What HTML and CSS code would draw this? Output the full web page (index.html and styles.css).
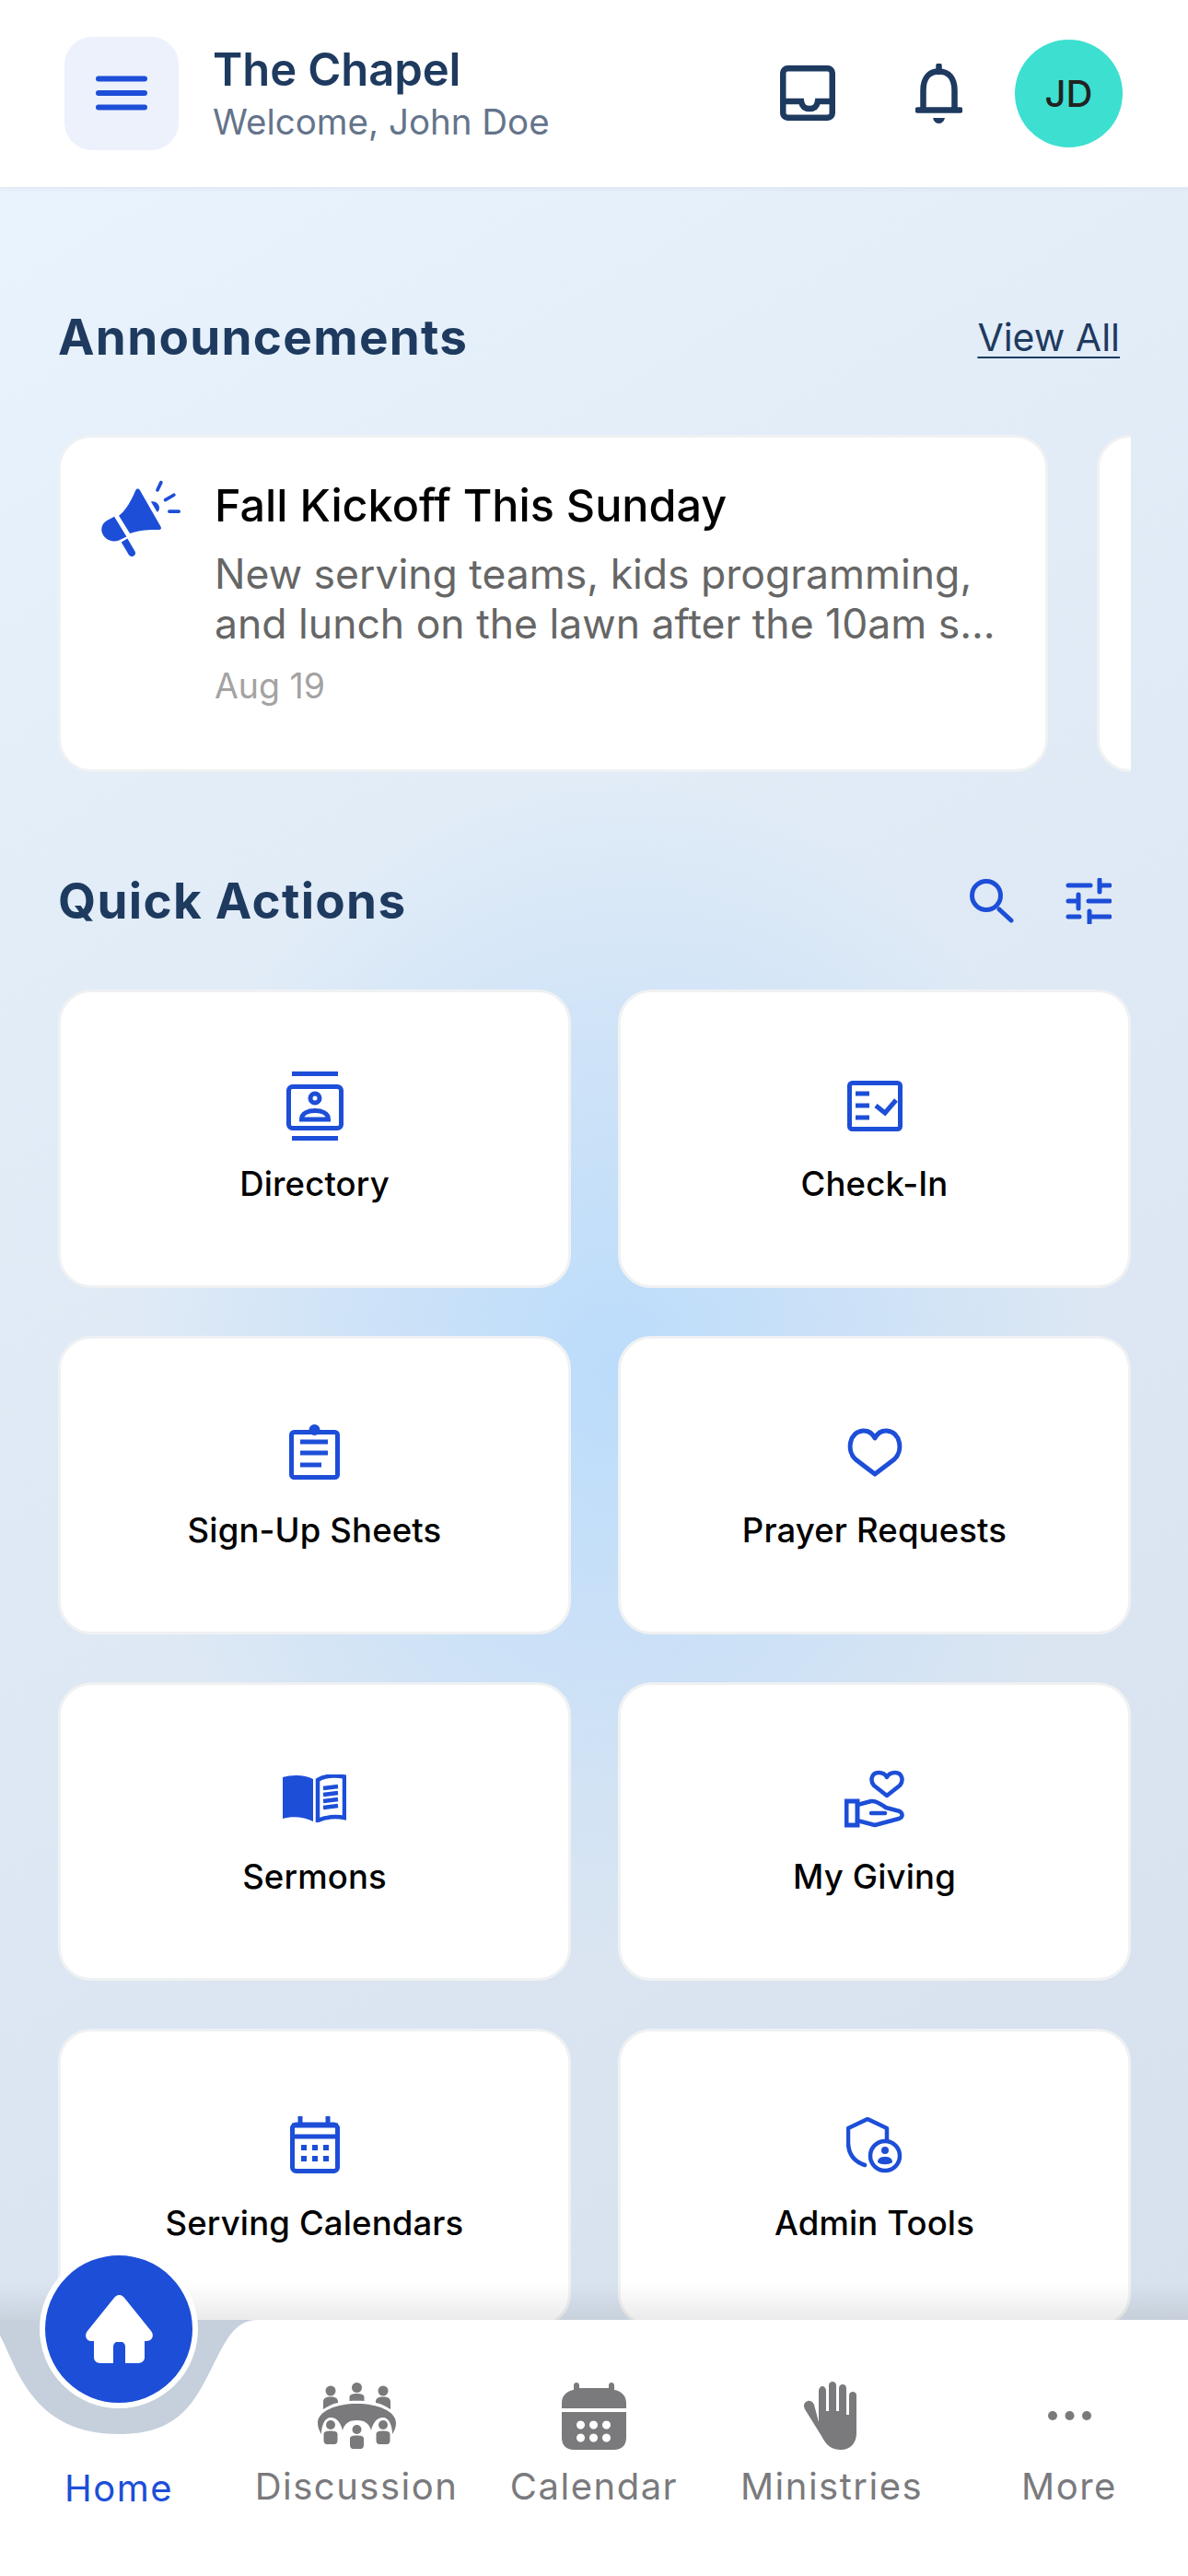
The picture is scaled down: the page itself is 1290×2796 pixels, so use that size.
FILE: index.html
```html
<!DOCTYPE html>
<html lang="en">
<head>
<meta charset="utf-8">
<title>The Chapel</title>
<link rel="stylesheet" href="styles.css">
</head>
<body>
<div class="app">
  <header class="topbar">
    <button class="menu-btn" aria-label="Menu">
      <svg width="56" height="38" viewBox="0 0 56 38" class="ic-stroke"><path d="M3 3.500H53M3 19H53M3 34.500H53"/></svg>
    </button>
    <div class="brand">
      <div class="brand-title">The Chapel</div>
      <div class="brand-sub">Welcome, John Doe</div>
    </div>
    <div class="top-actions">
      <svg class="ic-navy inbox" width="60" height="60" viewBox="0 0 60 60"><rect x="3.250" y="3.250" width="53.500" height="53.500" rx="5"/><path d="M3 39H23C24 45 27 47 32 47C37 47 40 45 41 39H57"/></svg>
      <svg class="ic-navy bell" width="51" height="65" viewBox="0 0 51 65"><path d="M8.500 50V29C8.500 16 15 8.500 25.500 8.500C36 8.500 42.500 16 42.500 29V50"/><path d="M2.500 50.500H48.500"/><path d="M25.500 2.500V9"/><path class="solid" d="M19 59H32C31 63 28.500 65 25.500 65C22.500 65 20 63 19 59Z"/></svg>
      <div class="avatar">JD</div>
    </div>
  </header>

  <main class="content">
    <div class="section-head ann-head">
      <h2>Announcements</h2>
      <a class="view-all">View All</a>
    </div>
    <div class="carousel">
      <article class="ann-card">
        <svg class="mega" width="88" height="85" viewBox="90 60 264 256"><path class="fill" d="M205 96C209 90 216 91 219 97L287 216C290 222 287 226 281 226C250 226 220 226 186 238L150 180C175 160 190 130 205 96Z"/><path class="fill" d="M135 183L175 248L150 260C125 270 100 255 94 232C91 214 100 200 115 193Z"/><path class="fill" d="M158 266L178 254L203 297C206 304 203 309 197 312C191 314 185 312 182 307Z"/><path class="fill" d="M255 134C268 130 280 140 282 152C283 160 280 165 275 168Z"/><path class="line" d="M288 71L276 96M302 128L330 112M315 166H346"/></svg>
        <div class="ann-body">
          <h3>Fall Kickoff This Sunday</h3>
          <p>New serving teams, kids programming, and lunch on the lawn after the 10am s...</p>
          <time>Aug 19</time>
        </div>
      </article>
      <article class="ann-card"></article>
    </div>

    <div class="section-head qa-head">
      <h2>Quick Actions</h2>
      <div class="qa-tools">
        <svg width="48" height="48" viewBox="0 0 48 48" class="ic-blue"><circle cx="18" cy="18" r="15.500"/><path d="M32 33L45 45"/></svg>
        <svg width="50" height="50" viewBox="0 0 50 50" class="ic-blue"><path d="M3 8H27M37 2V15M37 8H48M3 25H13M14 18V33M25 25H48M3 42H15M26 36V49M26 42H48"/></svg>
      </div>
    </div>

    <div class="tiles">
      <a class="tile"><span class="tile-ic"><svg width="62" height="75" viewBox="0 0 62 75" class="ic-blue butt"><path d="M6 2.500H56M6 72.500H56"/><rect x="2.500" y="16.500" width="57" height="45" rx="4"/><circle cx="31" cy="29" r="5"/><path d="M16.500 52C16.500 45 24 42.500 31 42.500C38 42.500 45.500 45 45.500 52Z"/></svg></span><span class="tile-label">Directory</span></a>

      <a class="tile"><span class="tile-ic"><svg width="60" height="55" viewBox="0 0 60 55" class="ic-blue butt"><rect x="2.500" y="2.500" width="55" height="50" rx="3"/><path d="M9 14H24M9 27H24M9 40H24"/><path d="M31 27L41 35L53 21"/></svg></span><span class="tile-label">Check-In</span></a>

      <a class="tile"><span class="tile-ic"><svg width="55" height="60" viewBox="0 0 55 60" class="ic-blue butt"><rect x="2.500" y="8.500" width="50" height="49" rx="3"/><circle class="solid" cx="27.500" cy="6" r="6"/><path d="M12 19H42M12 31H42M12 44H35"/></svg></span><span class="tile-label">Sign-Up Sheets</span></a>

      <a class="tile"><span class="tile-ic"><svg width="60" height="55" viewBox="0 0 60 55" class="ic-blue"><path d="M30 51L9 35C-1 26 2 5 17 4C24 3.500 28 8 30 12C32 8 36 3.500 43 4C58 5 61 26 51 35Z"/></svg></span><span class="tile-label">Prayer Requests</span></a>

      <a class="tile"><span class="tile-ic"><svg width="69" height="52" viewBox="0 0 69 52" class="ic-blue butt thin"><path class="solid" d="M0 3C10 0 24 0 33 5V51C24 46 10 45 0 48Z"/><path d="M38 6C46 1 58 1 67 2.500V47C58 45 46 46 38 50Z"/><path d="M44 15L60 13M44 22L60 20M44 29L60 27M44 36L60 34"/></svg></span><span class="tile-label">Sermons</span></a>

      <a class="tile"><span class="tile-ic"><svg width="65" height="63" viewBox="0 0 65 63" class="ic-blue thin"><path d="M46 28L32 17C27 11 30 3 37 3C41 3 44.500 5 46 8C47.500 5 51 3 55 3C62 3 65 11 60 17Z"/><path class="square" d="M2 34H14V60H2Z"/><path d="M14 38L29 34C35 33 40 38 45 41L60 45C64 48 63 52 59 53L33 60L14 55"/><path d="M29 47H44"/></svg></span><span class="tile-label">My Giving</span></a>

      <a class="tile"><span class="tile-ic"><svg width="54" height="62" viewBox="0 0 54 62" class="ic-blue butt"><rect x="2.500" y="9" width="49" height="50.500" rx="4"/><path d="M11 0V9M41 0V9M2 22H52M2 10H52"/><path class="squares" d="M12 31h6v6h-6zM24 31h6v6h-6zM36 31h6v6h-6zM12 43h6v6h-6zM24 43h6v6h-6zM36 43h6v6h-6z"/></svg></span><span class="tile-label">Serving Calendars</span></a>

      <a class="tile"><span class="tile-ic"><svg width="61" height="61" viewBox="0 0 61 61" class="ic-blue thin"><path d="M44 25V12L23 2L2 12V27C2 40 8 48 20 52"/><circle cx="42" cy="42" r="16"/><circle class="solid" cx="42" cy="36" r="4"/><path class="solid" d="M34 49C34 44 38 43 42 43C46 43 50 44 50 49C46 52 38 52 34 49Z"/></svg></span><span class="tile-label">Admin Tools</span></a>
    </div>
  </main>

  <nav class="tabbar">
    <svg class="tab-bg" width="1290" height="328" viewBox="0 -50 1290 328">
      <defs><linearGradient id="fade" x1="0" y1="0" x2="0" y2="1"><stop offset="0" stop-color="#000" stop-opacity="0"/><stop offset="1" stop-color="#000" stop-opacity=".08"/></linearGradient></defs>
      <rect x="0" y="-40" width="1290" height="40" fill="url(#fade)"/>
      <rect x="0" y="0" width="290" height="130" fill="#c5d0dc"/>
      <path d="M0 17C18 50 34 124 129 124C196 124 212 88 232 48C246 20 256 0 280 0H1290V278H0Z" fill="#fff"/>
    </svg>
    <div class="tab tab-active">
      <span class="home-fab">
        <svg width="75" height="74" viewBox="0 0 75 74"><path d="M37.500 0C40 0 42 1.500 43 3L72 39C76 44 73 50 67 50H65V68C65 71 62 74 58 74H44V56C44 53 42 51 40 51H35C33 51 31 53 31 56V74H17C13 74 10 71 10 68V50H7C2 50 -1 44 3 39L32 3C33 1.500 35 0 37.500 0Z" fill="#fff"/></svg>
      </span>
      <span class="tab-ic"></span>
      <span class="tab-label">Home</span>
    </div>
    <div class="tab">
      <span class="tab-ic"><svg width="85" height="72" viewBox="0 0 85 72" class="ic-grey"><circle cx="14" cy="9" r="5.500"/><circle cx="42.500" cy="5.500" r="5.500"/><circle cx="71" cy="9" r="5.500"/><path d="M6 29V21C6 17 9 15.500 14 15.500C19 15.500 22 17 22 21V22C16 23 11 26 6 29ZM34.500 20V16C34.500 13 38 12 42.500 12C47 12 50.500 13 50.500 16V20C45 19.500 40 19.500 34.500 20ZM79 29V21C79 17 76 15.500 71 15.500C66 15.500 63 17 63 21V22C69 23 74 26 79 29Z"/><path d="M0 44C0 31 20 23 42.500 23C65 23 85 31 85 44C85 49 83 53 81 56C81 46 77 38 71 38C64 38 60 44 58 52C56 44 50 41 42.500 41C35 41 29 44 27 52C25 44 21 38 14 38C8 38 4 46 4 56C2 53 0 49 0 44Z"/><circle cx="14" cy="46" r="5"/><circle cx="42.500" cy="51" r="5"/><circle cx="71" cy="46" r="5"/><path d="M6.500 63V56C6.500 53 10 52.500 14 52.500C18 52.500 21.500 53 21.500 56V63C21.500 65.500 20 67 18 67H10C8 67 6.500 65.500 6.500 63ZM35 68V61C35 58 38 57.500 42.500 57.500C47 57.500 50 58 50 61V68C50 70.500 48.500 72 46.500 72H38.500C36.500 72 35 70.500 35 68ZM63.500 63V56C63.500 53 67 52.500 71 52.500C75 52.500 78.500 53 78.500 56V63C78.500 65.500 77 67 75 67H67C65 67 63.500 65.500 63.500 63Z"/></svg></span>
      <span class="tab-label">Discussion</span>
    </div>
    <div class="tab">
      <span class="tab-ic"><svg width="70" height="73" viewBox="0 0 70 73" class="ic-grey"><path d="M13 8V3C13 1 14.500 0 16 0C17.500 0 19 1 19 3V6H51V3C51 1 52.500 0 54 0C55.500 0 57 1 57 3V8C64 9 70 14 70 22V28H0V22C0 14 6 9 13 8Z"/><path fill-rule="evenodd" d="M0 32H70V60C70 68 65 73 57 73H13C5 73 0 68 0 60ZM25 46a4.500 4.500 0 1 0 0 .01ZM39 46a4.500 4.500 0 1 0 0 .01ZM53 46a4.500 4.500 0 1 0 0 .01ZM25 60a4.500 4.500 0 1 0 0 .01ZM39 60a4.500 4.500 0 1 0 0 .01ZM53 60a4.500 4.500 0 1 0 0 .01Z"/></svg></span>
      <span class="tab-label">Calendar</span>
    </div>
    <div class="tab">
      <span class="tab-ic"><svg width="60" height="74" viewBox="0 0 60 74" class="ic-grey"><path d="M16 44V10C16 7 18 5 20 5C22 5 24 7 24 10V32H27V4C27 1.500 29 0 31 0C33 0 35 1.500 35 4V32H38V7C38 4.500 40 3 42 3C44 3 46 4.500 46 7V36H49V15C49 12 51 11 53 11C55 11 57 12 57 15V56C57 67 50 74 40 74C30 74 24 69 19 59L1 30C-1 26 0 23 3 21.500C5.500 20 9 21 11 25Z"/></svg></span>
      <span class="tab-label">Ministries</span>
    </div>
    <div class="tab">
      <span class="tab-ic"><svg width="47" height="12" viewBox="0 0 47 12" class="ic-grey"><circle cx="5" cy="6" r="5"/><circle cx="23.500" cy="6" r="5"/><circle cx="42" cy="6" r="5"/></svg></span>
      <span class="tab-label">More</span>
    </div>
  </nav>
</div>
</body>
</html>
```
FILE: styles.css
```css
* { box-sizing: border-box; }
html, body { margin: 0; padding: 0; }
body { font-family: Inter, "Noto Sans", "Liberation Sans", sans-serif; }
h2, h3, p { margin: 0; }
svg { display: block; flex: none; }

.app {
  position: relative;
  width: 1290px;
  height: 2796px;
  overflow: hidden;
  display: flex;
  flex-direction: column;
  background:
    radial-gradient(ellipse 520px 640px at 670px 1490px, #bbdcfb 0%, rgba(190,220,250,.6) 45%, rgba(190,220,250,0) 100%),
    linear-gradient(150deg, #ebf5fe 0%, #e2edf8 28%, #dce7f3 60%, #d6dfeb 100%);
}

.topbar {
  height: 204px;
  flex: none;
  display: flex;
  align-items: center;
  padding: 0 71px 1px 70px;
  background: #fff;
  border-bottom: 1px solid #e4e9f0;
  box-shadow: 0 2px 4px rgba(30, 58, 95, .04);
}
.menu-btn {
  width: 124px;
  height: 123px;
  border: 0;
  padding: 0;
  border-radius: 30px;
  background: #ecf1fc;
  display: flex;
  align-items: center;
  justify-content: center;
}
.ic-stroke { fill: none; stroke: #1d4ed8; stroke-width: 6; stroke-linecap: round; }
.brand { margin-left: 37px; flex: 1; padding-top: 3px; }
.brand-title { font-size: 49px; line-height: 56px; font-weight: 600; color: #1e3a5f; letter-spacing: -.1px; }
.brand-sub { font-size: 38.500px; line-height: 50px; margin-top: 3px; color: #64748b; }
.top-actions { display: flex; align-items: center; }
.ic-navy { fill: none; stroke: #1e3a5f; stroke-width: 6.500; stroke-linecap: round; }
.ic-navy .solid { fill: #1e3a5f; stroke: none; }
.bell { margin-left: 87px; }
.avatar {
  width: 117px;
  height: 117px;
  margin-left: 57px;
  border-radius: 50%;
  background: #3ddfd0;
  color: #222;
  font-size: 40px;
  font-weight: 500;
  display: flex;
  align-items: center;
  justify-content: center;
}

.content { flex: 1; padding: 0 62px 0 63px; min-height: 0; }
.section-head { display: flex; align-items: center; justify-content: space-between; height: 62px; }
.section-head h2 { font-size: 53px; line-height: 62px; font-weight: 700; color: #1e3a5f; letter-spacing: 1.300px; }
.ann-head { margin-top: 131px; padding-right: 12px; }
.view-all { font-size: 41px; color: #1e3a5f; text-decoration: underline; text-underline-offset: 6px; text-decoration-thickness: 2px; }

.carousel { display: flex; gap: 53px; margin-top: 75px; overflow: hidden; height: 366px; }
.ann-card {
  flex: none;
  width: 1075px;
  height: 366px;
  background: #fff;
  border: 3px solid #f0f1f3;
  border-radius: 36px;
  display: flex;
  align-items: flex-start;
  padding: 45px 30px 0 43px;
}
.mega .fill { fill: #1d4ed8; }
.mega .line { fill: none; stroke: #1d4ed8; stroke-width: 11; stroke-linecap: round; }
.ann-body { margin-left: 36px; min-width: 0; flex: 1; }
.ann-body h3 { font-size: 48.500px; line-height: 56px; font-weight: 500; color: #000; margin-top: 1px; }
.ann-body p { font-size: 44.500px; line-height: 54px; color: #666; margin-top: 19px; }
.ann-body time { display: block; font-size: 37.500px; line-height: 46px; color: #a3a3a3; margin-top: 18px; }

.qa-head { margin-top: 109px; }
.qa-tools { display: flex; align-items: center; gap: 56px; padding-right: 21px; }
.ic-blue { fill: none; stroke: #1d4ed8; stroke-width: 5; stroke-linecap: round; stroke-linejoin: round; }
.ic-blue.butt { stroke-linecap: butt; stroke-linejoin: miter; stroke-width: 5; }
.ic-blue.thin { stroke-width: 4.500; }
.ic-blue .solid { fill: #1d4ed8; stroke: none; }
.ic-blue .square { stroke-linejoin: miter; stroke-width: 5; }
.ic-blue .squares { fill: #1d4ed8; stroke: none; }

.tiles {
  display: grid;
  grid-template-columns: 1fr 1fr;
  grid-auto-rows: 324px;
  gap: 52px 51px;
  margin-top: 65px;
}
.tile {
  background: #fff;
  border: 3px solid #f0f1f3;
  border-radius: 36px;
  display: flex;
  flex-direction: column;
  align-items: center;
  padding-top: 85px;
}
.tile-ic { height: 76px; display: flex; align-items: center; justify-content: center; }
.tile-label { margin-top: 25px; font-size: 36.500px; line-height: 44px; font-weight: 500; color: #000; letter-spacing: .15px; }

.tabbar {
  position: absolute;
  left: 0;
  right: 0;
  top: 2518px;
  height: 278px;
  display: flex;
  padding-top: 66px;
}
.tab-bg { position: absolute; left: 0; top: -50px; }
.tab {
  position: relative;
  flex: 1;
  display: flex;
  flex-direction: column;
  align-items: center;
}
.tab-ic { height: 76px; display: flex; align-items: center; justify-content: center; }
.tab-label { margin-top: 15px; font-size: 40px; line-height: 48px; color: #7a7a7d; letter-spacing: 1.500px; }
.tab-active .tab-label { color: #1d4ed8; margin-top: 17px; }
.ic-grey { fill: #7a7a7d; }
.home-fab {
  position: absolute;
  left: 43px;
  top: -142px;
  width: 172px;
  height: 172px;
  border-radius: 50%;
  background: #1d4ed8;
  border: 6px solid #fff;
  display: flex;
  align-items: center;
  justify-content: center;
}
```
